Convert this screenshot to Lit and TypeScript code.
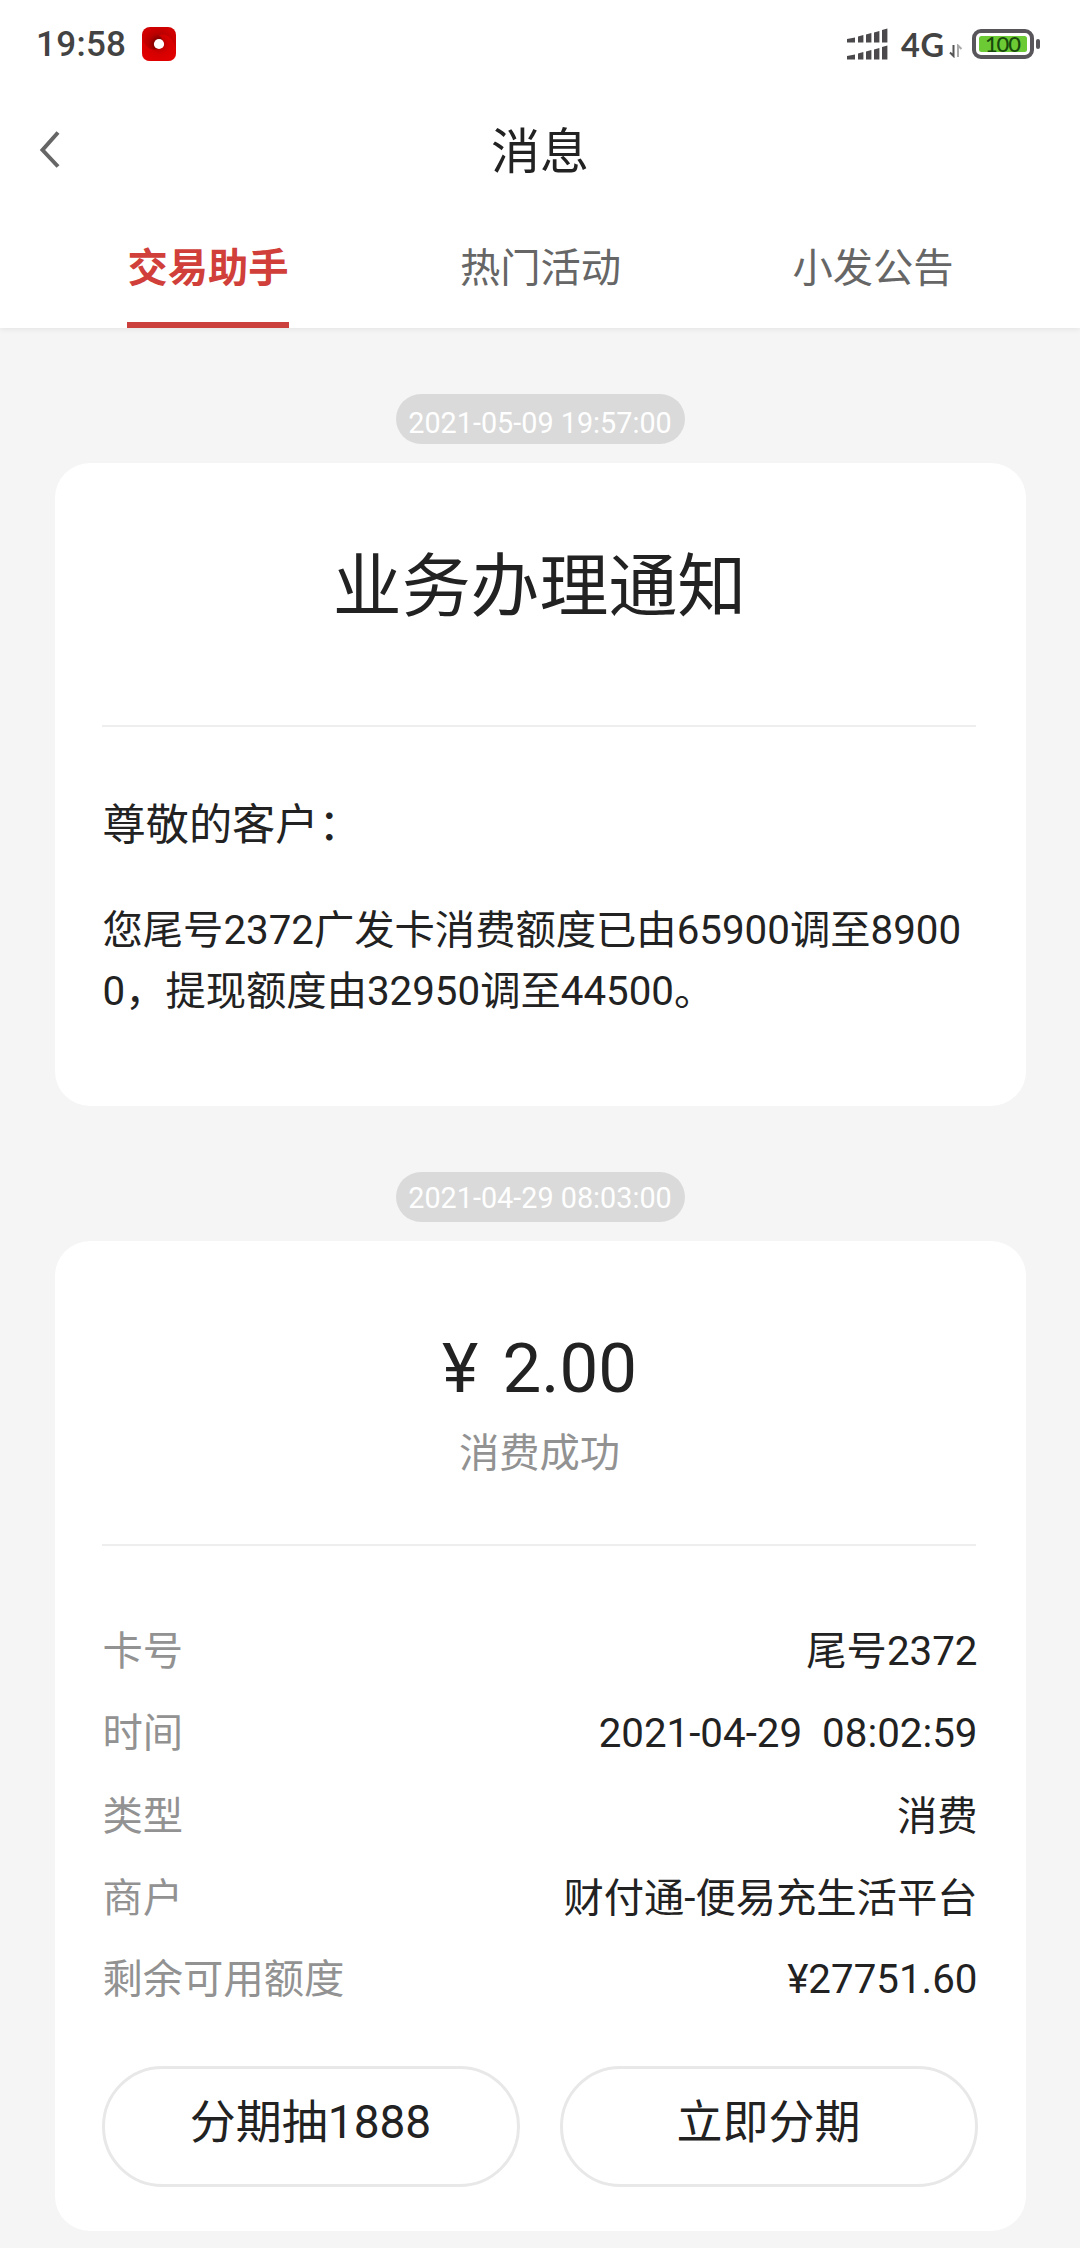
import { LitElement, html, css, svg } from "lit";
import { customElement, property } from "lit/decorators.js";

const CJK = css`Roboto, "Noto Sans CJK SC", sans-serif`;

@customElement("status-bar")
class StatusBar extends LitElement {
  static styles = css`
    :host { display: flex; align-items: center; height: 88px; padding: 0 38px 0 36px; color: #434343; }
    .time { font: 500 35px/40px Roboto, sans-serif; letter-spacing: 0.3px; width: 106px; padding-top: 2px; }
    .app { display: block; width: 34px; height: 34px; }
    .spacer { flex: 1; }
    .signal { display: block; width: 41px; height: 32px; margin-right: 13px; }
    .net { font: 700 32.5px/40px Lato, sans-serif; width: 45px; padding-top: 1px; letter-spacing: 0.6px; }
    .arrows { display: block; width: 14px; height: 14px; margin: 14px 9px 0 3px; }
    .battery { display: block; width: 70px; height: 30px; }
    .level { font: 500 22px Lato, sans-serif; fill: #17480c; }
  `;

  render() {
    const heights = [5, 7.5, 9.5, 11.5, 14];
    const xs = [0, 11, 19, 27, 35];
    const bars = (bottom: number) =>
      heights.map((h, i) => {
        const w = i === 0 ? 8 : 5.4;
        return svg`<path d="M${xs[i]} ${bottom - h + 1.4}L${xs[i] + w} ${bottom - h}V${bottom}H${xs[i]}Z"></path>`;
      });
    return html`
      <span class="time">19:58</span>
      <svg class="app" viewBox="0 0 34 34">
        <defs>
          <radialGradient id="g">
            <stop offset="0.25" stop-color="#7d0000"></stop>
            <stop offset="0.6" stop-color="#b80000"></stop>
            <stop offset="1" stop-color="#d00000"></stop>
          </radialGradient>
        </defs>
        <rect width="34" height="34" rx="8" fill="url(#g)"></rect>
        <path d="M0 12C5 22 10 24 15 22C21 22 24 14 17 8C26 6 31 12 34 22V26Q34 34 26 34H8Q0 34 0 26Z" fill="#ea0000" opacity=".6"></path>
        <circle cx="17" cy="17" r="5.1" fill="#fff"></circle>
      </svg>
      <span class="spacer"></span>
      <svg class="signal" viewBox="0 0 41 32" fill="#4b494b">${bars(14.5)}${bars(31.5)}</svg>
      <span class="net">4G</span>
      <svg class="arrows" viewBox="0 0 14 14" fill="none" stroke-width="2">
        <path d="M4.5 1V12L1 8.5" stroke="#555"></path>
        <path d="M9 13V1.5L12.5 5" stroke="#aaa"></path>
      </svg>
      <svg class="battery" viewBox="0 0 70 30">
        <rect x="2" y="2" width="58" height="26" rx="7" fill="#fff" stroke="#59565b" stroke-width="4"></rect>
        <rect x="7" y="7" width="48" height="16" rx="2.5" fill="#6ccb35"></rect>
        <rect x="64" y="10" width="4" height="10" rx="2" fill="#59565b"></rect>
        <text class="level" x="31" y="23.3" text-anchor="middle" textLength="36">100</text>
      </svg>
    `;
  }
}

@customElement("nav-header")
class NavHeader extends LitElement {
  static styles = css`
    :host { display: block; font-family: ${CJK}; }
    .bar { display: grid; grid-template-columns: 100px 1fr 100px; align-items: center; height: 122px; }
    .back { display: block; width: 24px; height: 40px; margin-left: 38px; }
    .title { text-align: center; font-size: 49px; line-height: 60px; color: #222; padding-top: 7px; }
    .tabs { display: flex; justify-content: space-between; height: 118px; padding: 0 126px 0 127px; }
    .tab { display: flex; align-items: center; justify-content: center; width: 162px; box-sizing: border-box;
      font-size: 40.3px; line-height: 60px; color: #666; white-space: nowrap; padding-top: 5px;
      border-bottom: 6px solid transparent; }
    .tab.active { color: #d13f3a; font-weight: 700; border-bottom-color: #cb403c; }
  `;
  @property({ type: Array }) tabs: string[] = [];

  render() {
    return html`
      <div class="bar">
        <svg class="back" viewBox="0 0 24 40" fill="none" stroke="#666" stroke-width="4">
          <path d="M20 3.5L4.5 21L20 37.5"></path>
        </svg>
        <div class="title">消息</div>
      </div>
      <div class="tabs">
        ${this.tabs.map((t, i) => html`<div class="tab ${i === 0 ? "active" : ""}">${t}</div>`)}
      </div>
    `;
  }
}

const ROWS = [
  ["卡号", "尾号2372"],
  ["时间", "2021-04-29  08:02:59"],
  ["类型", "消费"],
  ["商户", "财付通-便易充生活平台"],
  ["剩余可用额度", "¥27751.60"],
];

@customElement("app-root")
class AppRoot extends LitElement {
  static styles = css`
    :host { display: flex; flex-direction: column; height: 2248px; overflow: hidden; background: #f5f5f5;
      font-family: ${CJK}; color: #222; }
    .top { flex: none; height: 328px; background: #fff; box-shadow: 0 1px 6px rgba(0, 0, 0, 0.08); }
    .feed { display: flex; flex-direction: column; align-items: center; padding-top: 66px; }
    .stamp { box-sizing: border-box; width: 289px; height: 50px; border-radius: 25px; background: #dadada; color: #fff;
      font-size: 28.8px; line-height: 50px; text-align: center; white-space: nowrap; padding-top: 1px; }
    .stamp.low { padding-top: 4px; }
    .card { box-sizing: border-box; width: 971px; background: #fff; border-radius: 35px; margin-top: 19px;
      padding: 0 48px 0 47px; }
    .notice { height: 643px; margin-bottom: 66px; }
    .record { height: 990px; }
    .headline { height: 262px; box-sizing: border-box; padding-top: 80px; font-size: 68.9px; line-height: 90px; text-align: center; }
    .rule { height: 2px; background: #eee; margin-right: 2px; }
    .greet { padding: 69px 0 0 1px; font-size: 43.2px; line-height: 60px; }
    .body { padding: 44px 0 0 1px; font-size: 40.3px; line-height: 61px; word-break: break-all; }
    .sum { height: 303px; box-sizing: border-box; padding-top: 83px; text-align: center; }
    .amount { font-size: 69px; line-height: 90px; white-space: pre; word-spacing: 7px; }
    .state { font-size: 40.3px; line-height: 60px; color: #929292; padding-top: 10px; }
    .rows { padding: 65px 0 0 1px; }
    .row { display: flex; justify-content: space-between; height: 82.4px; font-size: 40.3px; line-height: 82px; white-space: pre; }
    .row:last-child { height: 80.4px; line-height: 77px; }
    .label { color: #929292; }
    .actions { display: flex; justify-content: space-between; padding-top: 45px; }
    .btn { box-sizing: border-box; width: 418px; height: 121px; border: 3px solid #e8e8e8; border-radius: 61px;
      font: 46px/107px ${CJK}; color: #222; text-align: center; background: #fff; padding: 0 0 8px; }
  `;

  render() {
    return html`
      <div class="top">
        <status-bar></status-bar>
        <nav-header .tabs=${["交易助手", "热门活动", "小发公告"]}></nav-header>
      </div>
      <div class="feed">
        <div class="stamp low">2021-05-09 19:57:00</div>
        <div class="card notice">
          <div class="headline">业务办理通知</div>
          <div class="rule"></div>
          <div class="greet">尊敬的客户：</div>
          <div class="body">您尾号2372广发卡消费额度已由65900调至89000，提现额度由32950调至44500。</div>
        </div>
        <div class="stamp">2021-04-29 08:03:00</div>
        <div class="card record">
          <div class="sum">
            <div class="amount">¥ 2.00</div>
            <div class="state">消费成功</div>
          </div>
          <div class="rule"></div>
          <div class="rows">
            ${ROWS.map(([k, v]) => html`<div class="row"><span class="label">${k}</span><span>${v}</span></div>`)}
          </div>
          <div class="actions">
            <button class="btn">分期抽1888</button>
            <button class="btn">立即分期</button>
          </div>
        </div>
      </div>
    `;
  }
}
